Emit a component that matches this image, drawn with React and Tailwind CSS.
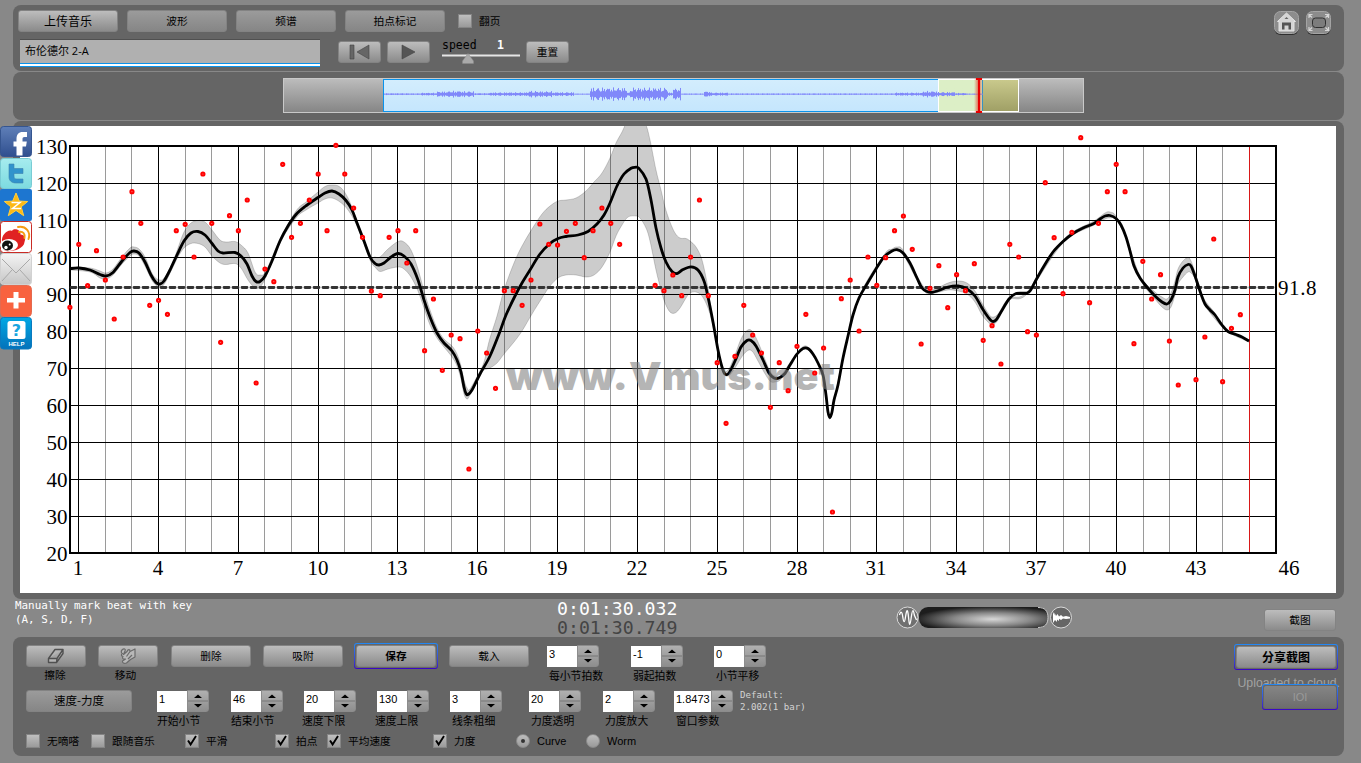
import React from 'react';

// One value per beat (y on the chart canvas), null = nothing plotted
const BEATS = [
  307.3, 244.3, 285.7, 250.7, 280, 319, 257, 191.7, 223.3, 305.3, 300.3, 314.3, 230.7, 224.3, 257, 174, 223.3, 342.3, 215.7, 230.7,
  200, 383, 269, 281.7, 164.3, 237.3, 223.3, 200, 174, 230.7, 145.3, 174, 208, 237.3, 291, 295.7, 237.3, 230.7, 263, 230.7,
  350.7, 299, 370.3, 335, 338.7, 469, 331, 353, 388.3, 290.7, 290.7, 305.3, 280, 224, 244.3, 245, 231.3, 223.3, 257.7, 230.7,
  208, 223.3, 244.3, null, null, null, 285.3, 290.7, 275, 295.7, 257, 200, 295.7, 362.7, 423.3, 356.3, 305.3, 335, 353, 407.3,
  362.7, 390.7, 346.3, 314.3, 373, 348, 512, 298.7, 280, 331, 257, 285.3, 257.7, 230.7, 216, 249.3, 344, 288.3, 265.7, 307.7,
  274.7, 290.7, 263.7, 340.3, 325.7, 364, 244.3, 257, 331.7, 335, 182.7, 237.7, 293.7, 232.3, 137.7, 302.7, 223.3, 191.7, 164.3, 191.7,
  343.7, 261.3, 299, 274.7, 341, 385, null, 379.7, 337, 239, 381.7, 328.3, 314.7,
];

const CURVE = [
  [70, 268.7], [79, 268], [90, 270], [100, 274.5], [106, 276], [113, 272.5], [122, 261], [130, 252.5], [134, 251], [139, 253], [145, 262],
  [151, 275], [156, 282.5], [160, 284], [164, 281], [170, 270], [177, 255], [184, 241], [191, 233], [198, 231.5], [205, 235], [212, 243.5],
  [218, 251], [223, 253], [235, 252.5], [241, 256], [247, 264], [252, 276], [256, 281.5], [260, 281.5], [265, 276], [272, 261], [280, 241],
  [288, 226], [296, 214.5], [305, 206.5], [318, 197.5], [325, 193], [332, 191], [339, 194], [346, 200.5], [352, 210], [357, 223], [364, 241],
  [370, 257], [375, 263.5], [379, 265], [384, 263], [391, 257], [398, 253.5], [404, 256], [411, 264], [418, 280], [424, 300], [430, 317],
  [437, 333], [444, 343], [452, 351], [457, 360], [461, 372], [464, 387], [466, 393.5], [468, 394.5], [472, 390], [480, 374], [490, 356],
  [499, 334], [506, 315], [515, 296], [522, 283], [530, 270], [540, 254], [550, 243.5], [558, 238.5], [566, 236.5], [578, 235], [588, 231.5],
  [597, 224], [604, 215], [610, 203], [617, 186], [624, 174], [631, 168.3], [635, 167.3], [639, 168.5], [646, 179], [651, 200], [656, 228],
  [661, 248], [666, 262], [672, 271.5], [677, 273.5], [683, 269.5], [691, 266.8], [698, 270], [704, 281], [708, 297], [713, 322], [718, 350],
  [722, 367], [725, 374], [729, 373], [735, 361], [741, 347], [747, 340.5], [751, 340.5], [756, 346], [763, 360], [769, 373], [774, 378],
  [779, 378], [785, 373.5], [790, 365], [797, 354], [803, 348.5], [808, 348.5], [813, 354], [818, 363], [823, 375], [826, 395], [828, 412],
  [830, 417.5], [832, 412], [834, 400], [838, 385], [843, 358], [848, 336], [853, 315], [859, 298], [867, 284], [876, 269], [884, 257],
  [892, 251], [897, 249.7], [903, 253], [910, 263], [917, 278], [922, 288], [927, 291.5], [932, 292.3], [940, 290], [948, 287], [958, 286],
  [967, 289], [975, 296], [982, 308], [988, 317], [992, 321.3], [996, 320], [1001, 312], [1009, 299], [1016, 293.5], [1027, 293], [1031, 289.5],
  [1036, 280], [1044, 266], [1053, 252], [1063, 241.5], [1073, 233.5], [1083, 228], [1094, 223.5], [1100, 219], [1105, 216], [1110, 215.5],
  [1116, 218.5], [1121, 225], [1126, 237], [1130, 251], [1134, 266], [1140, 278], [1147, 287], [1155, 296], [1162, 302], [1167, 304],
  [1171, 300], [1175, 290], [1178, 277], [1183, 268], [1188, 264.5], [1191, 266], [1195, 276], [1200, 291], [1205, 304], [1210, 310],
  [1215, 315], [1222, 325], [1228, 331.5], [1236, 334.5], [1242, 337], [1249, 341],
];

// [x, top, bottom] of the grey loudness band
const BAND = [
  [70, 267, 270], [90, 268, 272], [100, 271, 278], [106, 273, 279], [113, 269, 275], [122, 257, 264], [130, 248, 256], [134, 247, 254], [139, 249, 256],
  [145, 257, 266], [153, 275, 282], [160, 280, 287], [165, 277, 283], [172, 264, 269], [178, 248, 257], [184, 232, 248], [191, 223, 243.5],
  [198, 220.5, 243.5], [205, 222, 247], [212, 230, 256], [220, 240, 263], [226, 242, 264.5], [235, 241.5, 263.5], [241, 245, 268], [248, 253, 280],
  [255, 272, 288], [260, 275, 287], [266, 271, 277], [280, 239, 243], [296, 211, 218], [306, 202, 210], [318, 192, 203], [325, 186.5, 199],
  [332, 185, 198], [340, 187, 202], [348, 198, 210], [357, 221, 226], [370, 255, 260], [375, 257, 267], [380, 257, 271.5], [388, 249, 269],
  [398, 241.5, 267], [404, 242, 269], [411, 250, 277], [418, 269, 291], [424, 291, 308], [430, 310, 325], [437, 328, 338], [444, 339, 347],
  [452, 346, 357], [457, 354, 366], [461, 366, 379], [464, 380, 394], [467, 388, 399], [470, 389, 395], [480, 371, 376], [484, 362, 370],
  [487, 350, 369], [490, 338, 368], [497, 316, 363], [504, 290, 354], [514, 263, 342], [522, 246, 331], [532, 229, 314], [542, 214, 298],
  [550, 206, 286], [558, 201, 278], [566, 200, 275], [576, 198, 275], [586, 191, 277], [594, 182, 275], [602, 173, 267], [610, 158, 252],
  [616, 143, 236], [622, 132, 225], [628, 120, 217], [636, 114, 216], [640, 114, 218], [646, 125, 228], [650, 140, 241], [656, 170, 270],
  [661, 190, 290], [665, 207, 303], [670, 222, 312], [675, 233, 313], [680, 238, 308], [686, 238.5, 298], [690, 241, 293], [696, 247, 292],
  [702, 260, 296], [708, 288, 308], [713, 320, 326], [722, 366, 369], [728, 370, 376], [735, 355, 368], [741, 339, 358], [747, 330.5, 351],
  [752, 331, 351], [758, 342, 361], [764, 357, 372], [770, 371, 381], [775, 376, 382], [782, 374, 378], [797, 353, 355], [808, 347, 350],
  [823, 374, 376], [830, 415, 419], [843, 357, 359], [859, 297, 299], [884, 255, 258], [892, 249, 252], [897, 247, 251], [903, 250, 254],
  [917, 276, 280], [926, 289, 293], [935, 289, 293], [948, 283, 290], [958, 281, 291], [967, 283, 294], [975, 291, 302], [982, 303, 315],
  [988, 313, 322], [992, 317, 325], [998, 314, 320], [1009, 298, 300], [1027, 292, 294], [1063, 240, 243], [1094, 221, 225], [1105, 213, 219],
  [1110, 212, 218], [1116, 216, 220], [1126, 236, 238], [1140, 276, 279], [1155, 292, 299], [1162, 297, 307], [1167, 299, 310],
  [1171, 293, 307], [1175, 281, 295], [1178, 269, 284], [1183, 261, 277], [1188, 257.5, 272], [1191, 261, 273], [1195, 272, 279],
  [1203, 297, 302], [1215, 313, 319], [1228, 331, 332], [1249, 340, 342],
];

// Catmull-Rom to bezier
const spline = (pts) =>
  pts.slice(1).map((p, i) => {
    const a = pts[i - 1] || pts[i];
    const b = pts[i];
    const d = pts[i + 2] || p;
    return `C${b[0] + (p[0] - a[0]) / 6},${b[1] + (p[1] - a[1]) / 6} ${p[0] - (d[0] - b[0]) / 6},${p[1] - (d[1] - b[1]) / 6} ${p[0]},${p[1]}`;
  }).join('');

const curvePath = `M${CURVE[0]}${spline(CURVE)}`;
const bandTop = BAND.map(([x, t]) => [x, t]);
const bandBottom = BAND.map(([x, , b]) => [x, b]).reverse();
const bandPath = `M${bandTop[0]}${spline(bandTop)}L${bandBottom[0]}${spline(bandBottom)}Z`;

const barX = (n) => Math.floor(78.6 + (n - 1) * 26.61) + 0.5;
const BARS = Array.from({ length: 45 }, (_, i) => i + 1);
const LEVELS = [130, 120, 110, 100, 90, 80, 70, 60, 50, 40, 30, 20];
const levelY = (v) => Math.round(146 + (130 - v) * 3.7) + 0.5;

function TempoChart() {
  return (
    <svg className="block h-[467px] w-[1316px] bg-white" viewBox="20 126 1316 467">
      {BARS.map((n) => (
        <line key={n} x1={barX(n)} x2={barX(n)} y1="146" y2="553" stroke={n % 3 === 1 ? '#000' : '#9a9a9a'} strokeWidth="1" />
      ))}
      {LEVELS.map((v) => (
        <line key={v} x1="70" x2="1276" y1={levelY(v)} y2={levelY(v)} stroke="#000" strokeWidth="1" />
      ))}
      <line x1="1249.5" x2="1249.5" y1="147" y2="552" stroke="#d81818" strokeWidth="1" />
      <rect x="70" y="146" width="1206" height="407" fill="none" stroke="#000" strokeWidth="2" />
      <path d={bandPath} fill="#000" fillOpacity="0.2" stroke="#000" strokeOpacity="0.22" strokeWidth="0.8" />
      <line x1="71" x2="1276" y1="287.5" y2="287.5" stroke="#333" strokeWidth="2.8" strokeDasharray="5 4" strokeLinecap="round" />
      <path d={curvePath} fill="none" stroke="#000" strokeWidth="2.8" strokeLinejoin="round" />
      <g opacity="0.58" fontFamily="Inter, 'Liberation Sans', sans-serif" fontWeight="900" fontSize="38" fill="#808080">
        <text x="506" y="390" textLength="122" lengthAdjust="spacingAndGlyphs">www.</text>
        <text x="629" y="390" textLength="206" lengthAdjust="spacingAndGlyphs">Vmus.net</text>
      </g>
      {BEATS.map((y, i) => y !== null && (
        <circle key={i} cx={69.9 + i * 8.867} cy={y} r="1.6" fill="#f77" stroke="#f00" strokeWidth="2" />
      ))}
      <g fontFamily="'Liberation Serif', serif" fontSize="21" fill="#000">
        {LEVELS.map((v) => (
          <text key={v} x="67.5" y={levelY(v) + 7} textAnchor="end">{v}</text>
        ))}
        {BARS.filter((n) => n % 3 === 1).map((n) => (
          <text key={n} x={barX(n) - 0.5} y="575" textAnchor="middle">{n}</text>
        ))}
        <text x="1289" y="575" textAnchor="middle">46</text>
        <text x="1278" y="295" textLength="38.5">91.8</text>
      </g>
    </svg>
  );
}

// Envelope segments of the recording: [from, to, amplitude]
const ENVELOPE = [
  [384, 408, 0.7], [408, 421, 0.6], [421, 437, 1.2], [437, 449, 2.6], [449, 462, 3.2], [462, 474, 2.8], [474, 490, 0.8], [490, 506, 1.6],
  [506, 528, 1.7], [528, 536, 3.2], [536, 552, 2.8], [552, 574, 1.8], [574, 590, 0.4], [590, 627, 6.6], [627, 630, 1.5], [630, 668, 6.6], [668, 673, 1.5],
  [673, 681, 6], [681, 704, 0.5], [704, 711, 2.8], [711, 728, 1.4], [728, 895, 0.6], [895, 923, 1.4], [923, 937, 3], [937, 955, 2], [955, 967, 1], [967, 983, 0.4],
];
const WAVE = ENVELOPE.flatMap(([from, to, amp]) =>
  Array.from({ length: to - from }, (_, i) => {
    const x = from + i;
    const k = 0.35 + 0.65 * Math.abs(Math.sin(x * 1.73) * Math.cos(x * 0.61));
    return `M${x + 0.5} ${93.9 - amp * k}V${94.4 + amp * k}`;
  })
).join('');

function Overview() {
  return (
    <div className="relative ml-[270px] h-[35px] w-[801px] border border-[#c9c9c9] bg-linear-to-b from-[#bcbcbc] to-[#868686]">
      <div className="absolute left-[99px] top-0 h-[33px] w-[600px] border border-[#0a93ec] bg-linear-to-b from-[#d3edfd] to-[#c5e6fd]" />
      <div className="absolute left-[654px] top-0 h-[33px] w-[81px] border border-white bg-linear-to-r from-[#dcefc6] from-40% to-[#d8edc0]">
        <div className="ml-[43px] h-full border-l border-[#2a9bd0] bg-linear-to-b from-[#c9c98c] to-[#a0a066]" />
      </div>
      <svg className="absolute -top-px left-[99px] h-[35px] w-[600px]" viewBox="383 78 600 35">
        <path d={WAVE} stroke="#8088fa" strokeWidth="1" />
      </svg>
      <div className="absolute -top-px left-[690px] flex h-[35px] w-[9px] justify-center bg-linear-to-r from-transparent via-[#e03020]/70 to-transparent">
        <div className="h-full w-[2px] bg-[#e80000]" />
      </div>
      <div className="absolute -top-px left-[692px] h-[2px] w-[6px] bg-[#e80000]" />
      <div className="absolute left-[692px] top-[32px] h-[2px] w-[6px] bg-[#e80000]" />
    </div>
  );
}

function Button({ children, className = 'w-[80px]', pressed }) {
  const tone = pressed ? 'from-[#9b9b9b] to-[#868686]' : 'from-[#bdbdbd] to-[#8b8b8b]';
  return (
    <button className={`flex h-[22px] items-center justify-center rounded-[3px] border border-[#838383] bg-linear-to-b text-[10.7px] leading-none text-black ${tone} ${className}`}>
      {children}
    </button>
  );
}

function Framed({ children, className }) {
  return (
    <div className={`rounded-[3px] bg-linear-to-b from-[#2289f5] to-[#3a00c4] p-px ${className}`}>
      <div className="h-full rounded-[2px] bg-[#666] p-px">{children}</div>
    </div>
  );
}

function Check({ label, checked }) {
  return (
    <label className="flex items-center gap-[7px] whitespace-nowrap text-[10.7px] leading-none">
      <span className="h-[14px] w-[14px] border border-[#858585] bg-linear-to-b from-[#bfbfbf] to-[#9a9a9a]">
        {checked && (
          <svg className="h-[12px] w-[12px]" viewBox="0 0 12 12">
            <path d="M2 5.5L4.6 9.4L10 1" fill="none" stroke="#000" strokeWidth="1.9" />
          </svg>
        )}
      </span>
      {label}
    </label>
  );
}

function Radio({ label, checked }) {
  return (
    <label className="flex items-center gap-[7px] font-['Liberation_Sans'] text-[11px] leading-none">
      <span className="flex h-[14px] w-[14px] items-center justify-center rounded-full border border-[#8a8a8a] bg-linear-to-b from-[#bdbdbd] to-[#9a9a9a]">
        {checked && <span className="h-1 w-1 rounded-full bg-[#333]" />}
      </span>
      {label}
    </label>
  );
}

function Stepper({ value, label, wide, shift = '' }) {
  return (
    <div>
      <div className="flex h-[22px] items-center">
        <div className={`h-[21px] overflow-hidden bg-white pl-[2px] pt-[2px] font-['Liberation_Sans'] text-[11px] leading-[13px] ${wide ? 'w-[37px]' : 'w-[30px]'}`}>{value}</div>
        <div className="flex h-[22px] w-[22px] flex-col items-center rounded-r-[3px] border border-[#8c8c8c] bg-linear-to-b from-[#b0b0b0] to-[#8e8e8e]">
          <svg className="h-[20px] w-[20px]" viewBox="0 0 20 20">
            <path d="M0 10H20" stroke="#777" />
            <path d="M6 7L10 3.4L14 7ZM6 13L10 16.6L14 13Z" fill="#000" />
          </svg>
        </div>
      </div>
      <div className={`mt-px whitespace-nowrap text-[10.8px] leading-[14px] ${shift}`}>{label}</div>
    </div>
  );
}

function ShareBar() {
  return (
    <svg className="absolute left-0 top-[126px] h-[224px] w-8" viewBox="0 0 32 224">
      <defs>
        <linearGradient id="fb" x2="0" y2="1"><stop stopColor="#5f7fb8" /><stop offset="1" stopColor="#2f4f8f" /></linearGradient>
        <linearGradient id="tw" x2="0" y2="1"><stop stopColor="#a6ecee" /><stop offset="1" stopColor="#7ddbe0" /></linearGradient>
        <linearGradient id="mail" x2="0" y2="1"><stop stopColor="#f4f4f4" /><stop offset="1" stopColor="#c6c6c6" /></linearGradient>
        <linearGradient id="help" x2="0" y2="1"><stop stopColor="#00a8e4" /><stop offset="1" stopColor="#0472ba" /></linearGradient>
      </defs>
      <rect x="0.5" y="0.5" width="31" height="30" rx="3" fill="url(#fb)" stroke="#35558f" />
      <path d="M16.5 29.500V20.500H13.5V15.500H16.5V13C16.5 8.500 18.8 6 22.5 6H27V11H24.5C23 11 22.5 11.700 22.5 13V15.500H26.8L26 20.500H22.5V29.500Z" fill="#fff" />

      <rect x="0.5" y="32.5" width="31" height="30" rx="3" fill="url(#tw)" stroke="#79ccd4" />
      <path d="M9 38H14V42.5H23V47.500H14V50C14 52.5 15 53 17 53H23V57H16C11.5 57 9 54.5 9 51Z" fill="#3193cc" stroke="#3e83ae" strokeWidth="0.6" />

      <rect x="0" y="63" width="32" height="32" rx="2" fill="#1d76d0" />
      <path d="M16 67L19.3 75.1L27.700 75.500L21.2 80.8L23.7 89.700L16 84.500L8.3 89.700L10.8 80.8L4.300 75.500L12.7 75.1Z" fill="#fdb913" stroke="#ffcf3e" />
      <path d="M11.5 76.5H20L12.5 82.500H21" fill="none" stroke="#fff" strokeWidth="1.500" />

      <rect x="0.5" y="95.5" width="31" height="31" rx="3" fill="#fff" stroke="#c92b25" />
      <path d="M2 116C1 109 8 103 12 105C13 102 21 103 20.5 108.500C25 109 26 112 24.5 116C24 123 12 126 6 125C2 123 1 120 2 116Z" fill="#e02222" />
      <ellipse cx="9" cy="119" rx="9" ry="6" fill="#fff" />
      <ellipse cx="7.5" cy="119.5" rx="5.500" ry="5" fill="#111" />
      <circle cx="6" cy="121.500" r="1.700" fill="#fff" />
      <circle cx="9.7" cy="118.5" r="1" fill="#fff" />
      <path d="M19 106C23 105 25.5 108 24.5 112M18 101C26 99.500 31 106 28.500 113" fill="none" stroke="#f59c14" strokeWidth="1.900" strokeLinecap="round" />

      <rect x="0.5" y="127.500" width="31" height="31" rx="3" fill="url(#mail)" stroke="#d2d2d2" />
      <path d="M2 133L16 147L30 133M2 155L12 144M30 155L20 144" fill="none" stroke="#a9a9a9" />

      <rect x="0.5" y="159.500" width="31" height="31" rx="4" fill="#f8623f" stroke="#e46a4f" />
      <path d="M13.500 166H18.500V172H25V176.500H18.500V182.500H13.500V176.500H7V172H13.500Z" fill="#fff" />

      <rect x="0.5" y="191.500" width="31" height="31.500" rx="3" fill="url(#help)" stroke="#0a7abf" />
      <rect x="7.500" y="195" width="18" height="18" rx="2.500" fill="#fff" />
      <text x="16.500" y="210" textAnchor="middle" fontFamily="'DejaVu Sans'" fontWeight="700" fontSize="16" fill="#18a5df">?</text>
      <text x="16.500" y="220" textAnchor="middle" fontFamily="'Liberation Sans'" fontWeight="700" fontSize="6" fill="#fff">HELP</text>
    </svg>
  );
}

function WindowIcons() {
  return (
    <svg className="h-[26px] w-[60px]" viewBox="0 0 60 26">
      <rect x="1.500" y="3" width="24" height="22" rx="6" fill="#2f2f2f" />
      <rect x="1.500" y="1.500" width="24" height="22" rx="6" fill="#8c8c8c" stroke="#a4a4a4" />
      <path d="M13.500 3L22.500 11.500H21V21H6V11.500H4.500Z" fill="#d5d5d5" stroke="#e4e4e4" strokeLinejoin="round" />
      <path d="M9 19.500V12.500H18V19.500H15.500V15.500H11.500V19.500Z" fill="#555" />
      <path d="M11.500 9L13.500 7L15.500 9Z" fill="#666" />
      <rect x="33.500" y="3" width="24" height="22" rx="6" fill="#2f2f2f" />
      <rect x="33.500" y="1.500" width="24" height="22" rx="6" fill="#8c8c8c" stroke="#a4a4a4" />
      <rect x="39.500" y="8" width="13" height="9.500" rx="3" fill="#7c7c7c" stroke="#303030" />
      <path d="M36 8V4.500H39.500M36.500 5L39 7.500M52 4.500H55.500V8M55 5L52.500 7.500M36 17V20.500H39.500M36.500 20L39 17.500M52 20.500H55.500V17M55 20L52.500 17.500" fill="none" stroke="#d5d5d5" strokeWidth="1.200" />
    </svg>
  );
}

export default function App() {
  return (
    <div className="relative h-[763px] w-[1361px] overflow-hidden bg-[#888] pl-[13px] pr-[17px] pt-[5px] font-['Noto_Sans_CJK_SC',sans-serif] text-black">
      {/* toolbar */}
      <div className="flex h-[66px] justify-between rounded-[8px] bg-[#656565] pl-[5px] pr-[11px] pt-[5px]">
        <div>
          <div className="flex items-center gap-[9px]">
            <Button className="w-[100px] text-[12px]!">上传音乐</Button>
            <Button className="w-[100px]" pressed>波形</Button>
            <Button className="w-[100px]" pressed>频谱</Button>
            <Button className="w-[100px]" pressed>拍点标记</Button>
            <div className="pl-[4px]"><Check label="翻页" /></div>
          </div>
          <div className="flex pl-[2px] pt-[7px]">
            <div className="mr-[18px] h-[28px] w-[300px] border-t border-[#505050] bg-[#b0b0b0]">
              <div className="h-[23px] pl-[5px] font-['Open_Sans','Noto_Sans_CJK_SC',sans-serif] text-[11px] leading-[22px]">布伦德尔 2-A</div>
              <div className="h-1 border-y border-[#0a93ec] bg-white" />
            </div>
            <div className="flex gap-[6px] pt-[2px]">
              <Button className="w-[43px]">
                <svg className="h-4 w-6" viewBox="0 0 24 16"><path d="M2 1H6V15H2ZM21 1V15L9 8Z" fill="#666" stroke="#444" strokeWidth="0.6" /></svg>
              </Button>
              <Button className="w-[43px]">
                <svg className="h-4 w-6" viewBox="0 0 24 16"><path d="M5 1V15L18 8Z" fill="#555" stroke="#444" strokeWidth="0.6" /></svg>
              </Button>
              <div className="ml-[6px] w-[78px] font-['DejaVu_Sans_Mono'] text-[11.500px]">
                <div className="-mt-[3px] flex h-[14px] justify-between pr-[16px] leading-[14px]">
                  <span>speed</span>
                  <span className="font-bold text-white">1</span>
                </div>
                <svg className="-mt-[2px] h-[14px] w-[78px]" viewBox="0 0 78 14">
                  <path d="M0 5.500H78" stroke="#e6e6e6" strokeWidth="2" />
                  <path d="M26 3.500L31.500 11V13.500H20.500V11Z" fill="#aaa" stroke="#8a8a8a" strokeWidth="0.5" />
                </svg>
              </div>
              <Button className="w-[43px]">重置</Button>
            </div>
          </div>
        </div>
        <WindowIcons />
      </div>

      <div className="mt-px h-[48px] rounded-[8px] bg-[#656565] pt-[6px]">
        <Overview />
      </div>

      <div className="mt-px h-[478px] rounded-[8px] bg-[#656565] pl-[7px] pt-[5px]">
        <TempoChart />
      </div>

      {/* time readout */}
      <div className="flex h-[38px] font-['DejaVu_Sans_Mono']">
        <div className="w-[544px] whitespace-nowrap pl-[2px] text-[10.900px] leading-[14px] text-white">
          Manually mark beat with key<br />(A, S, D, F)
        </div>
        <div className="w-[338px] text-[18.200px] leading-[19px]">
          <div className="text-white">0:01:30.032</div>
          <div className="text-[#444]">0:01:30.749</div>
        </div>
        <svg className="h-[38px] w-[180px]" viewBox="895 599 180 38">
          <defs>
            <radialGradient id="knob" cx="0.57" cy="0.58" r="0.6"><stop stopColor="#d8d8d8" /><stop offset="0.5" stopColor="#888" /><stop offset="1" stopColor="#1d1d1d" /></radialGradient>
          </defs>
          <circle cx="907.500" cy="617.500" r="10.500" fill="#707070" stroke="#d9d9d9" />
          <path d="M899.500 615C900.500 611 902 611 902.800 617S904.500 623.500 905.500 617S907.500 607 908.500 617S910 626.500 911.300 617S913.500 610 914.300 615L916.500 620" fill="none" stroke="#fff" strokeWidth="1.300" />
          <rect x="919" y="607" width="129" height="21" rx="9" fill="url(#knob)" />
          <path d="M1038 607.500C1045 607.500 1048 611 1048 617.500S1045 627.500 1038 627.500" fill="none" stroke="#ccc" />
          <circle cx="1061" cy="617.500" r="10.500" fill="#666" stroke="#d9d9d9" />
          <path d="M1053 612L1054.500 615V612.500L1056 616L1057.500 614L1059 616.500L1061 615L1063 616.800L1066 616L1070 617V618.500L1066 619L1063 618.500L1061 620L1059 618.700V621L1057 619.500V622L1055 620L1053 623Z" fill="#fff" />
        </svg>
        <Button className="ml-[189px] mt-[10px] w-[72px] font-['Noto_Sans_CJK_SC']">截图</Button>
      </div>

      {/* control panel */}
      <div className="flex h-[119px] justify-between rounded-[8px] bg-[#656565] pl-[13px] pr-[6px] pt-[8px]">
        <div>
          <div className="grid h-[45px] grid-cols-[72px_73px_92px_91px_95px_98px_84px_83px_60px] items-start">
            <div className="w-[60px] text-center text-[10.700px] leading-[14px]">
              <Button className="mb-px w-[60px]">
                <svg className="h-[18px] w-[20px]" viewBox="0 0 20 18"><path d="M2.500 11.500L9 2.500H17L11 11.500ZM2.500 11.500V15.500H10.500L17 6.500V2.500M11 11.500L10.500 15.500" fill="#b4b4b4" stroke="#505050" strokeWidth="1.400" strokeLinejoin="round" /></svg>
              </Button>
              <div className="-ml-[2px]">擦除</div>
            </div>
            <div className="w-[60px] text-center text-[10.700px] leading-[14px]">
              <Button className="mb-px w-[60px]">
                <svg className="h-[18px] w-[20px]" viewBox="0 0 20 18"><path d="M4 3C6 1 8 2 7 4L5.500 7.500L9 4.500C10 2 12 2 12 4.500L17 2V10L12.500 12.500L8.500 16C6 17 4 15.500 4.500 14L7.500 12C4.500 12.500 4 11 5 9.500C3 9 3 7.500 4.500 6.500C3 6 3 4 4 3ZM12 4.500L8.500 9.500M10 12L14 8" fill="#b8b8b8" stroke="#6a6a6a" strokeWidth="1.200" strokeLinejoin="round" /></svg>
              </Button>
              <div className="-ml-[5px]">移动</div>
            </div>
            <Button>删除</Button>
            <Button>吸附</Button>
            <Framed className="-mt-[2px] h-[26px] w-[84px]"><Button className="w-full font-bold">保存</Button></Framed>
            <Button>载入</Button>
            <Stepper value="3" label="每小节拍数" shift="pl-[2px]" />
            <Stepper value="-1" label="弱起拍数" shift="pl-[2px]" />
            <Stepper value="0" label="小节平移" shift="pl-[2px]" />
          </div>
          <div className="grid h-[44px] grid-cols-[131px_74px_73px_73px_73px_79px_74px_71px_66px_80px] items-start">
            <Button className="w-[106px] text-[11.500px]!" pressed>速度-力度</Button>
            <Stepper value="1" label="开始小节" />
            <Stepper value="46" label="结束小节" />
            <Stepper value="20" label="速度下限" shift="-ml-[2px]" />
            <Stepper value="130" label="速度上限" shift="-ml-[2px]" />
            <Stepper value="3" label="线条粗细" shift="pl-[2px]" />
            <Stepper value="20" label="力度透明" shift="pl-[2px]" />
            <Stepper value="2" label="力度放大" shift="pl-[2px]" />
            <Stepper value="1.8473" label="窗口参数" shift="pl-[2px]" wide />
            <div className="-mt-px whitespace-nowrap font-['DejaVu_Sans_Mono'] text-[9.100px] leading-[12px] text-[#d4d4d4]">Default:<br />2.002(1 bar)</div>
          </div>
          <div className="grid h-[14px] grid-cols-[65px_94px_90px_52px_106px_83px_70px_60px] items-center">
            <Check label="无嘀嗒" />
            <Check label="跟随音乐" />
            <Check label="平滑" checked />
            <Check label="拍点" checked />
            <Check label="平均速度" checked />
            <Check label="力度" checked />
            <Radio label="Curve" checked />
            <Radio label="Worm" />
          </div>
        </div>
        <div className="flex w-[104px] flex-col items-end">
          <Framed className="-mt-px h-[26px] w-[104px]"><Button className="w-full text-[12px]! font-bold">分享截图</Button></Framed>
          <div className="-mr-[2px] mt-[6px] h-[8px] whitespace-nowrap font-['Liberation_Sans'] text-[12.300px] leading-[14px] text-[#a2a2a2]">Uploaded to cloud.</div>
          <Framed className="relative h-[26px] w-[76px]">
            <div className="flex h-[22px] items-center justify-center rounded-[2px] bg-linear-to-b from-[#858585] to-[#6d6d6d] font-['Liberation_Sans'] text-[11px] text-[#999]">IOI</div>
          </Framed>
        </div>
      </div>

      <ShareBar />
    </div>
  );
}
